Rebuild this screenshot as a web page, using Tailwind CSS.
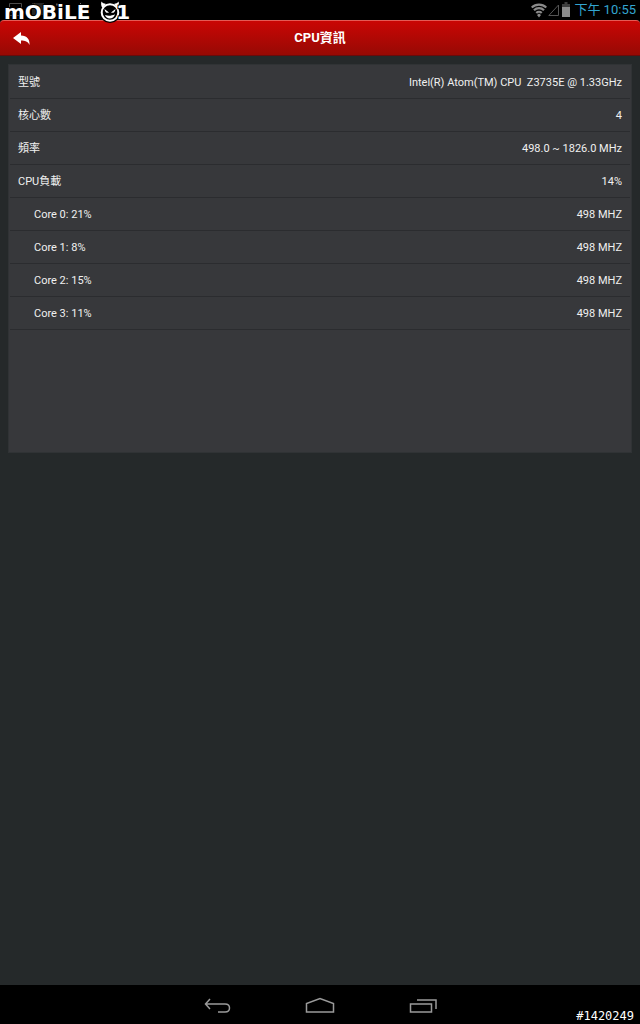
<!DOCTYPE html>
<html lang="zh-Hant">
<head>
  <meta charset="UTF-8" />
  <meta name="viewport" content="width=device-width, initial-scale=1" />
  <title>CPU資訊</title>
  <script src="https://cdn.jsdelivr.net/npm/@tailwindcss/browser@4"></script>
</head>
<body class="bg-black font-[Roboto,'Noto_Sans_CJK_TC',sans-serif] text-white">
  <div class="flex min-h-screen flex-col">

    <!-- Status bar -->
    <div class="relative flex h-5 items-center justify-between pr-1 pl-2">
      <div class="flex items-center gap-2 text-[#4c4c4c]">
        <svg class="h-4 w-4" viewBox="0 0 16 16" fill="none" stroke="currentColor"><path d="M1.5 1.5h12v12h-12zM3.500 11l3-3 2 2 2-2 2 3" /></svg>
        <svg class="h-4 w-4" viewBox="0 0 16 16"><path fill="currentColor" d="M0 1h12v12H0z" opacity=".5" /><path stroke="#c8701c" stroke-width="1.5" d="M2 2l3 3" /></svg>
        <svg class="h-4 w-4" viewBox="0 0 16 16" fill="currentColor"><path d="M1 1l1.500 1.500L1 4-.500 2.500z" /></svg>
        <svg class="h-4 w-4" viewBox="0 0 16 16" fill="#777"><path d="M-2 1h2v7h2l-3 4-3-4h2z" transform="translate(1 0)" /></svg>
      </div>
      <div class="flex items-center">
        <svg class="mr-px h-4 w-4" viewBox="0 0 16 16" fill="none" stroke="#8b8b8b" stroke-width="2.200"><path d="M.7 5.500a10.500 10.500 0 0 1 14.600 0M3 8.300a7 7 0 0 1 10 0M5.300 10.900a3.800 3.800 0 0 1 5.400 0" /><path fill="#8b8b8b" stroke="none" d="M8 11.500l2 1.500L8 15.500 6 13z" /></svg>
        <svg class="h-4 w-3" viewBox="0 0 12 16" fill="none" stroke="#555"><path d="M.800 13.500L10.500 3v10.500z" /></svg>
        <svg class="h-4 w-3" viewBox="0 0 12 16"><path fill="#3d3d3d" d="M4.500 0h3v2H10v13H2V2h2.500z" /><path fill="#8b8b8b" d="M2 5h8v10H2z" /></svg>
        <span class="ml-0.5 text-[13px] leading-5 text-[#33a5d0]">下午 10:55</span>
      </div>
      <div class="absolute top-0 left-1 z-10 flex h-6 items-center">
        <span class="font-['DejaVu_Sans',sans-serif] text-xl leading-6 font-bold text-white [paint-order:stroke] [-webkit-text-stroke:2px_black]">mOBiLE</span>
        <svg class="ml-2 h-6 w-6" viewBox="0 0 24 24">
          <path d="M3.500 2c0 2 1 3 2 4M20.500 2c0 2-1 3-2 4" stroke="#000" stroke-width="4" />
          <circle cx="12" cy="12.500" r="10.500" />
          <circle cx="12" cy="12.500" r="8.300" fill="none" stroke="#fff" stroke-width="2" />
          <path fill="#fff" d="M3.500 1.500c1 1.500 2.500 2 4.500 2.500L4.500 8C3 6 2.800 3.500 3.500 1.500zM20.500 1.500c-1 1.500-2.500 2-4.500 2.500L19.500 8c1.500-2 1.700-4.500 1-6.500zM6.500 9l4.500 3.500c-2 1-4 0-4.500-3.500zM17.500 9L13 12.500c2 1 4 0 4.500-3.500z" />
          <path fill="#fff" d="M7 15c3.500 1.200 6.500.8 10-.8-1 5-8.500 6-10 .8z" />
        </svg>
        <span class="-ml-1.5 font-['DejaVu_Sans',sans-serif] text-xl leading-6 font-bold text-white [paint-order:stroke] [-webkit-text-stroke:2px_black]">1</span>
      </div>
    </div>

    <main class="flex grow flex-col bg-[#25292a]">
      <!-- Title bar -->
      <header class="bg-black">
        <div class="grid h-9 grid-cols-3 items-center rounded-t-sm border-t border-[#e45a55] border-b border-b-[#690b0b] bg-linear-to-b from-[#ca0504] to-[#970904]">
          <button type="button" aria-label="返回" class="ml-3 w-5">
            <svg class="h-4 w-5" viewBox="0 0 20 16" fill="#fff"><path d="M1 8l8-6v3.500c6 0 9 4 8.500 9.500C16 11.500 13 10.500 9 10.500V14z" /></svg>
          </button>
          <h1 class="text-center text-[13px] leading-5 font-bold">CPU資訊</h1>
        </div>
      </header>

      <section class="m-2 min-h-[389px] border border-[#303335] bg-[#37383b] px-px">
        <table class="w-full border-collapse text-[11px] text-[#f0f0f0]">
          <tbody>
            <tr class="h-[33px] border-b border-[#2b2c2f]">
              <th scope="row" class="pt-1 pl-2 text-left font-normal">型號</th>
              <td class="pt-1 pr-2 text-right whitespace-pre">Intel(R) Atom(TM) CPU  Z3735E @ 1.33GHz</td>
            </tr>
            <tr class="h-[33px] border-b border-[#2b2c2f]">
              <th scope="row" class="pt-1 pl-2 text-left font-normal">核心數</th>
              <td class="pt-1 pr-2 text-right">4</td>
            </tr>
            <tr class="h-[33px] border-b border-[#2b2c2f]">
              <th scope="row" class="pt-1 pl-2 text-left font-normal">頻率</th>
              <td class="pt-1 pr-2 text-right">498.0 ~ 1826.0 MHz</td>
            </tr>
            <tr class="h-[33px] border-b border-[#2b2c2f]">
              <th scope="row" class="pt-1 pl-2 text-left font-normal">CPU負載</th>
              <td class="pt-1 pr-2 text-right">14%</td>
            </tr>
            <tr class="h-[33px] border-b border-[#2b2c2f]">
              <th scope="row" class="pt-1 pl-6 text-left font-normal">Core 0: 21%</th>
              <td class="pt-1 pr-2 text-right">498 MHZ</td>
            </tr>
            <tr class="h-[33px] border-b border-[#2b2c2f]">
              <th scope="row" class="pt-1 pl-6 text-left font-normal">Core 1: 8%</th>
              <td class="pt-1 pr-2 text-right">498 MHZ</td>
            </tr>
            <tr class="h-[33px] border-b border-[#2b2c2f]">
              <th scope="row" class="pt-1 pl-6 text-left font-normal">Core 2: 15%</th>
              <td class="pt-1 pr-2 text-right">498 MHZ</td>
            </tr>
            <tr class="h-[33px] border-b border-[#2b2c2f]">
              <th scope="row" class="pt-1 pl-6 text-left font-normal">Core 3: 11%</th>
              <td class="pt-1 pr-2 text-right">498 MHZ</td>
            </tr>
          </tbody>
        </table>
      </section>
    </main>

    <!-- Navigation bar -->
    <nav class="relative flex h-[39px] items-center justify-center gap-[70px] pt-1 text-[#9a9a9a]">
      <button type="button" aria-label="上一頁">
        <svg class="h-5 w-8" viewBox="0 0 32 20" fill="none" stroke="currentColor" stroke-width="1.5"><path d="M8 2L3.500 7 8 12M4 7h19c6 0 6 8 0 8h-7" /></svg>
      </button>
      <button type="button" aria-label="主畫面">
        <svg class="h-5 w-8" viewBox="0 0 32 20" fill="none" stroke="currentColor" stroke-width="1.5"><path d="M2.500 15V6.500L16 1.500l13.500 5V15z" /></svg>
      </button>
      <button type="button" aria-label="最近使用">
        <svg class="h-5 w-8" viewBox="0 0 32 20" fill="none" stroke="currentColor" stroke-width="1.5"><path d="M4.500 7h21v8h-21zM11 3h19v9" /></svg>
      </button>
      <span class="absolute right-1.5 bottom-0 font-['DejaVu_Sans_Mono',monospace] text-xs leading-4 text-white">#1420249</span>
    </nav>

  </div>
</body>
</html>
